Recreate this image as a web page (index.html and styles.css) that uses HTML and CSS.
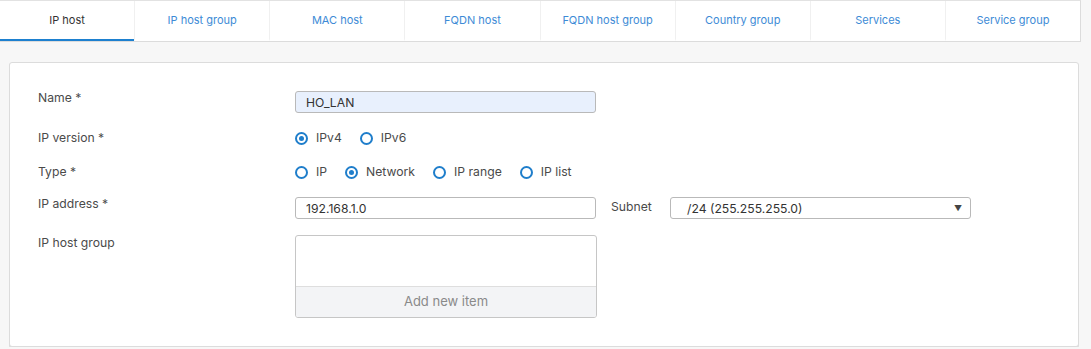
FILE: index.html
```html
<!DOCTYPE html>
<html lang="en">
<head>
    <meta charset="UTF-8">
    <meta name="viewport" content="width=device-width, initial-scale=1.0">
    <title>IP host</title>
    <link rel="stylesheet" href="styles.css">
</head>
<body>
    <div class="tabs">
        <div class="tab active">IP host</div>
        <div class="tab">IP host group</div>
        <div class="tab">MAC host</div>
        <div class="tab">FQDN host</div>
        <div class="tab">FQDN host group</div>
        <div class="tab">Country group</div>
        <div class="tab">Services</div>
        <div class="tab">Service group</div>
    </div>

    <div class="card">
        <div class="row row-name">
            <div class="label">Name *</div>
            <input type="text" class="field filled" value="HO_LAN">
        </div>
        <div class="row row-radio">
            <div class="label">IP version *</div>
            <div class="radios">
                <label class="radio"><span class="dot checked"></span>IPv4</label>
                <label class="radio"><span class="dot"></span>IPv6</label>
            </div>
        </div>
        <div class="row row-radio">
            <div class="label">Type *</div>
            <div class="radios">
                <label class="radio"><span class="dot"></span>IP</label>
                <label class="radio"><span class="dot checked"></span>Network</label>
                <label class="radio"><span class="dot"></span>IP range</label>
                <label class="radio"><span class="dot"></span>IP list</label>
            </div>
        </div>
        <div class="row row-addr">
            <div class="label">IP address *</div>
            <input type="text" class="field" value="192.168.1.0">
            <div class="sublabel">Subnet</div>
            <div class="select">
                <span>/24 (255.255.255.0)</span>
                <span class="arrow">&#9660;</span>
            </div>
        </div>
        <div class="row">
            <div class="label">IP host group</div>
            <div class="listbox">
                <div class="list-items"></div>
                <div class="list-add">Add new item</div>
            </div>
        </div>
    </div>
</body>
</html>
```

FILE: styles.css
```css
body {
    margin: 0;
    padding: 0;
    background: #f7f7f7;
    font-family: Inter, "Liberation Sans", sans-serif;
    color: #4a4a4a;
}
.tabs {
    display: flex;
    width: 1080px;
    height: 40px;
    background: #fff;
    border-top: 1px solid #e2e2e2;
    border-right: 1px solid #dcdcdc;
    border-bottom: 1px solid #dcdcdc;
    box-sizing: content-box;
}
.tab {
    flex: 1;
    text-align: center;
    line-height: 38px;
    font-size: 11px;
    color: #3d8bd6;
    border-left: 1px solid #f0f0f0;
    border-bottom: 2px solid transparent;
}
.tab:first-child {
    border-left: none;
}
.tab.active {
    color: #333;
    border-bottom-color: #1d80cf;
}
.card {
    margin: 20px 12px 0 9px;
    background: #fff;
    border: 1px solid #dcdcdc;
    border-radius: 3px;
    box-shadow: 0 1px 0 #d8d8d8;
    padding: 28px 28px 27px;
    height: 228px;
    box-sizing: content-box;
}
.row {
    display: flex;
    align-items: flex-start;
    margin-bottom: 14px;
}
.label {
    width: 257px;
    flex: none;
    font-size: 12.2px;
    line-height: 16px;
}
.row-name .label {
    margin-top: -1px;
}
.row-name {
    margin-bottom: 16px;
}
.row-radio .label {
    line-height: 18px;
}
.row-radio {
    height: 20px;
}
.row-addr {
    margin-top: 1px;
    margin-bottom: 16px;
}
.row-addr .label {
    margin-top: -1px;
}
.field {
    width: 301px;
    height: 22px;
    box-sizing: border-box;
    border: 1px solid #b9b9b9;
    border-radius: 3px;
    padding: 0 10px;
    font-family: inherit;
    font-size: 12.2px;
    color: #333;
    background: #fff;
    outline: none;
}
.field.filled {
    background: #e8f0fd;
}
.radios {
    display: flex;
    gap: 18px;
}
.radio {
    display: flex;
    align-items: center;
    gap: 8px;
    font-size: 12.2px;
    line-height: 18px;
    color: #4a4a4a;
}
.dot {
    width: 13px;
    height: 13px;
    box-sizing: border-box;
    border: 2px solid #1f7ecb;
    border-radius: 50%;
    display: flex;
    align-items: center;
    justify-content: center;
}
.dot.checked::after {
    content: "";
    width: 5px;
    height: 5px;
    border-radius: 50%;
    background: #1f7ecb;
}
.sublabel {
    margin-left: 15px;
    width: 59px;
    font-size: 12.2px;
    line-height: 20px;
}
.select {
    width: 301px;
    height: 22px;
    box-sizing: border-box;
    border: 1px solid #b9b9b9;
    border-radius: 3px;
    display: flex;
    align-items: center;
    justify-content: space-between;
    padding: 0 8px 0 16px;
    font-size: 12.2px;
    color: #333;
}
.arrow {
    font-size: 8px;
    color: #444;
}
.listbox {
    width: 302px;
    height: 83px;
    box-sizing: border-box;
    border: 1px solid #c6c6c6;
    border-radius: 3px;
    display: flex;
    flex-direction: column;
    overflow: hidden;
}
.list-items {
    flex: 1;
}
.list-add {
    height: 30px;
    line-height: 29px;
    border-top: 1px solid #dedede;
    background: #f3f4f6;
    text-align: center;
    font-size: 13px;
    color: #8a8a8a;
}
```
